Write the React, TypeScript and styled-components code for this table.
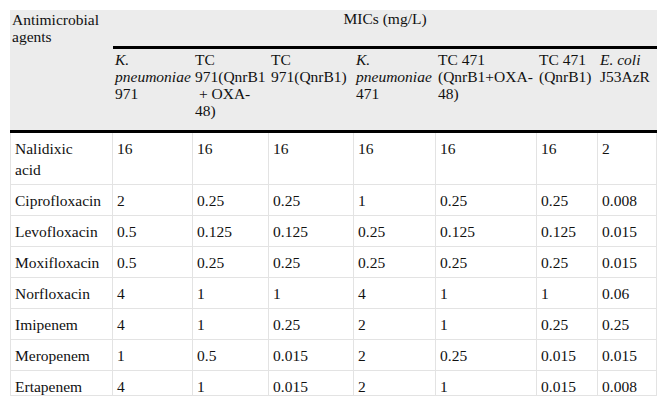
import React from "react";
import styled, { createGlobalStyle } from "styled-components";

const serif = `"Liberation Serif", "Times New Roman", serif`;

const GlobalStyle = createGlobalStyle`
  html, body {
    margin: 0;
    padding: 0;
    background: #ffffff;
  }
  body {
    font-family: ${serif};
    color: #111111;
  }
`;

const Page = styled.div`
  padding: 10px;
`;

const Clip = styled.div`
  width: 647px;
  height: 386px;
  overflow: hidden;
  box-sizing: border-box;
  border-bottom: 1px solid #e3e3e3;
`;

const Table = styled.table`
  border-collapse: separate;
  border-spacing: 0;
  table-layout: fixed;
  width: 647px;
  font-family: ${serif};
  font-size: 15.5px;
  color: #111111;
`;

const Head = styled.thead`
  background: #ececec;
`;

const HeadCell = styled.th<{ $center?: boolean; $tall?: boolean }>`
  font-family: ${serif};
  font-weight: normal;
  text-align: ${(p) => (p.$center ? "center" : "left")};
  vertical-align: top;
  line-height: 17px;
  white-space: nowrap;
  padding: ${(p) => (p.$tall ? "2px 2px 11px" : "0 2px 19px")};
  border-bottom: 3px solid #000000;
`;

const LabelCell = styled.th`
  font-family: ${serif};
  font-weight: normal;
  text-align: left;
  vertical-align: top;
  line-height: 17px;
  padding: 1px 2px 0;
  border-bottom: 3px solid #000000;
`;

const Cell = styled.td<{ $first?: boolean }>`
  font-family: ${serif};
  vertical-align: top;
  line-height: 21px;
  padding: 5px 4px 4px;
  white-space: nowrap;
  border-right: 1px solid #e3e3e3;
  border-bottom: 1px solid #e3e3e3;
  border-left: ${(p) => (p.$first ? "1px solid #e3e3e3" : "none")};
`;

const Em = styled.i`
  font-style: italic;
`;

const widths = [103, 80, 76, 85, 82, 101, 61, 59];

const strains: React.ReactNode[] = [
  <>
    <Em>K.</Em>
    <br />
    <Em>pneumoniae</Em>
    <br />
    971
  </>,
  <>
    TC
    <br />
    971(QnrB1
    <br />
    {"\u00a0+ OXA-"}
    <br />
    48)
  </>,
  <>
    TC
    <br />
    971(QnrB1)
  </>,
  <>
    <Em>K.</Em>
    <br />
    <Em>pneumoniae</Em>
    <br />
    471
  </>,
  <>
    TC 471
    <br />
    (QnrB1+OXA-
    <br />
    48)
  </>,
  <>
    TC 471
    <br />
    (QnrB1)
  </>,
  <>
    <Em>E. coli</Em>
    <br />
    J53AzR
  </>,
];

const rows: { agent: string[]; values: string[] }[] = [
  { agent: ["Nalidixic", "acid"], values: ["16", "16", "16", "16", "16", "16", "2"] },
  { agent: ["Ciprofloxacin"], values: ["2", "0.25", "0.25", "1", "0.25", "0.25", "0.008"] },
  { agent: ["Levofloxacin"], values: ["0.5", "0.125", "0.125", "0.25", "0.125", "0.125", "0.015"] },
  { agent: ["Moxifloxacin"], values: ["0.5", "0.25", "0.25", "0.25", "0.25", "0.25", "0.015"] },
  { agent: ["Norfloxacin"], values: ["4", "1", "1", "4", "1", "1", "0.06"] },
  { agent: ["Imipenem"], values: ["4", "1", "0.25", "2", "1", "0.25", "0.25"] },
  { agent: ["Meropenem"], values: ["1", "0.5", "0.015", "2", "0.25", "0.015", "0.015"] },
  { agent: ["Ertapenem"], values: ["4", "1", "0.015", "2", "1", "0.015", "0.008"] },
];

export default function App() {
  return (
    <>
      <GlobalStyle />
      <Page>
        <Clip>
          <Table>
            <colgroup>
              {widths.map((w, i) => (
                <col key={i} style={{ width: w }} />
              ))}
            </colgroup>
            <Head>
              <tr>
                <LabelCell rowSpan={2}>
                  Antimicrobial
                  <br />
                  agents
                </LabelCell>
                <HeadCell colSpan={7} $center>
                  MICs (mg/L)
                </HeadCell>
              </tr>
              <tr>
                {strains.map((s, i) => (
                  <HeadCell key={i} $tall>
                    {s}
                  </HeadCell>
                ))}
              </tr>
            </Head>
            <tbody>
              {rows.map((r) => (
                <tr key={r.agent.join(" ")}>
                  <Cell $first>
                    {r.agent.map((line, i) => (
                      <React.Fragment key={i}>
                        {i > 0 && <br />}
                        {line}
                      </React.Fragment>
                    ))}
                  </Cell>
                  {r.values.map((v, i) => (
                    <Cell key={i}>{v}</Cell>
                  ))}
                </tr>
              ))}
            </tbody>
          </Table>
        </Clip>
      </Page>
    </>
  );
}
